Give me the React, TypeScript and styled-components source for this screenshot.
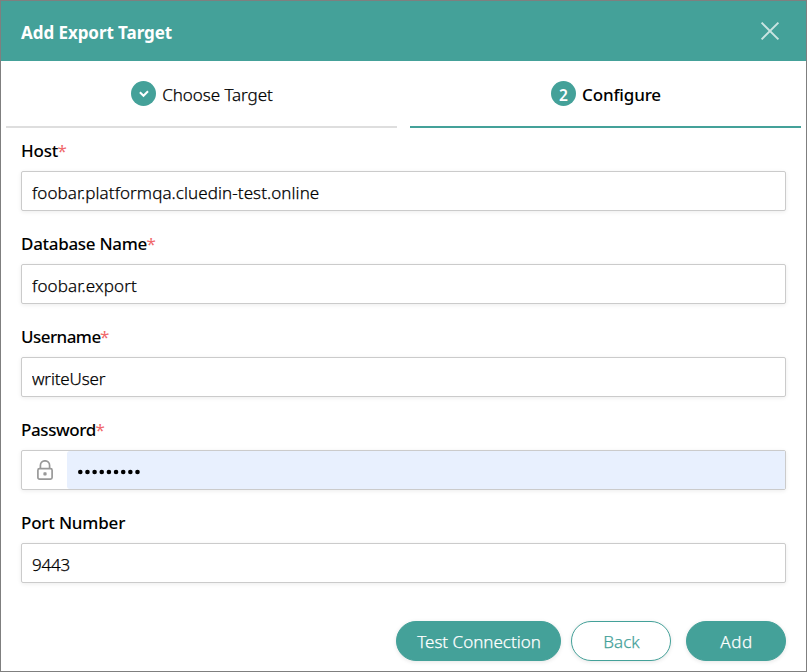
import React from 'react';
import styled, { createGlobalStyle } from 'styled-components';

const TEAL = '#44a199';

const GlobalStyle = createGlobalStyle`
  *, *::before, *::after { box-sizing: border-box; }
  body { margin: 0; background: #fff; }
  button, input { font: inherit; }
`;

const Dialog = styled.main`
  width: 807px;
  height: 672px;
  display: flex;
  flex-direction: column;
  border: 1px solid #7f7f7f;
  background: #fff;
  color: #000;
  font: 400 17px/24px "Noto Sans", "Open Sans", sans-serif;
`;

const Header = styled.header`
  flex: none;
  height: 60px;
  padding: 0 26px 0 20px;
  display: flex;
  align-items: center;
  justify-content: space-between;
  background: ${TEAL};
  color: #fff;
`;

const Title = styled.h1`
  margin: 3px 0 0;
  font-size: 17px;
  font-weight: 700;
  line-height: 24px;
  letter-spacing: -0.06px;
`;

const CloseButton = styled.button`
  display: flex;
  padding: 0;
  border: 0;
  background: none;
  color: #c9e4e1;
`;

const Steps = styled.nav`
  flex: none;
  display: grid;
  grid-template-columns: 391px 391px;
  column-gap: 13px;
  padding-left: 5px;
`;

const Step = styled.div<{ $active?: boolean }>`
  height: 67px;
  padding: 20px 0 0 1px;
  display: flex;
  justify-content: center;
  align-items: flex-start;
  gap: 6px;
  border-bottom: 2px solid ${p => (p.$active ? TEAL : '#dedede')};
`;

const StepBadge = styled.span`
  width: 25px;
  height: 25px;
  display: flex;
  align-items: center;
  justify-content: center;
  border-radius: 50%;
  background: ${TEAL};
  color: #fff;
  font-size: 15.5px;
  font-weight: 600;
  line-height: 25px;
  padding-top: 3px;
`;

const StepLabel = styled.span<{ $active?: boolean }>`
  margin-top: 2px;
  font-weight: ${p => (p.$active ? 500 : 300)};
  letter-spacing: ${p => (p.$active ? '-0.15px' : '-0.05px')};
  -webkit-text-stroke: ${p => (p.$active ? '0' : '0.25px')} #000;
`;

const Form = styled.form`
  flex: 1;
  display: flex;
  flex-direction: column;
  padding: 11px 20px 10px;
`;

const Field = styled.label`
  display: flex;
  flex-direction: column;
  gap: 8px;
  height: 93px;
`;

const Caption = styled.span<{ $tracking: number }>`
  height: 24px;
  font-weight: 500;
  letter-spacing: ${p => p.$tracking}px;
`;

const Required = styled.span`
  margin-left: -0.5px;
  color: #f0696b;
  font-weight: 400;
  letter-spacing: 0;
`;

const InputFrame = styled.span`
  height: 40px;
  display: flex;
  border: 1px solid #cbcbcb;
  border-radius: 2px;
  background: #fff;
  box-shadow: 0 1px 4px rgba(0, 0, 0, 0.08);
`;

const LockCell = styled.span`
  width: 45px;
  padding-left: 1px;
  display: flex;
  align-items: center;
  justify-content: center;
  color: #999;
`;

const Input = styled.input<{ $tracking: number }>`
  flex: 1;
  min-width: 0;
  padding: 4px 10px 0;
  border: 0;
  border-radius: 2px;
  outline: 0;
  background: transparent;
  color: #000;
  font-weight: 300;
  letter-spacing: ${p => p.$tracking}px;
  -webkit-text-stroke: 0.25px #000;
`;

const SecretValue = styled.span`
  flex: 1;
  display: flex;
  align-items: center;
  padding: 3px 0 0 11px;
  border-radius: 3px 1px 1px 3px;
  background: #e8f0fe;
`;

const Actions = styled.footer`
  margin-top: auto;
  display: flex;
  justify-content: flex-end;
`;

const Button = styled.button<{ $width: number; $gap?: number; $outline?: boolean; $tracking?: number }>`
  width: ${p => p.$width}px;
  height: 40px;
  margin-left: ${p => p.$gap ?? 0}px;
  padding: 2px 0 0 1px;
  border: 1px solid ${TEAL};
  border-radius: 20px;
  background: ${p => (p.$outline ? '#fff' : TEAL)};
  color: ${p => (p.$outline ? TEAL : '#fff')};
  font-weight: 300;
  letter-spacing: ${p => p.$tracking ?? 0}px;
  -webkit-text-stroke: 0.25px currentColor;
  box-shadow: 0 1px 4px rgba(0, 0, 0, 0.1);
`;

const CloseIcon = () => (
  <svg width="20" height="20" viewBox="0 0 20 20" fill="none" stroke="currentColor" strokeWidth="2">
    <path d="M1.6 1.6 18.4 18.4M18.4 1.6 1.6 18.4" />
  </svg>
);

const CheckIcon = () => (
  <svg width="11" height="11" viewBox="0 0 11 11" fill="none" stroke="currentColor" strokeWidth="2">
    <path d="M1.9 2.2 5.5 5.8 10 1.3" />
  </svg>
);

const LockIcon = () => (
  <svg width="16" height="20" viewBox="0 0 16 20" fill="none" stroke="currentColor" strokeWidth="1.7">
    <rect x="0.9" y="8.6" width="14.2" height="10.5" rx="1.6" />
    <path d="M3.4 8.6V5.4a4.6 4.6 0 0 1 9.2 0V8.6" />
    <rect x="6.4" y="12.3" width="3.2" height="3.2" rx="0.8" fill="currentColor" stroke="none" />
  </svg>
);

const PasswordDots = () => (
  <svg width="64" height="6" viewBox="0 0 64 6" fill="#000" aria-label="Password entered">
    {Array.from({ length: 9 }, (_, i) => (
      <circle key={i} cx={2.3 + i * 7.15} cy="3" r="2.3" />
    ))}
  </svg>
);

interface FieldData {
  label: string;
  value?: string;
  required?: boolean;
  secret?: boolean;
  labelTracking: number;
  valueTracking?: number;
}

const fields: FieldData[] = [
  { label: 'Host', value: 'foobar.platformqa.cluedin-test.online', required: true, labelTracking: -0.2, valueTracking: 0.08 },
  { label: 'Database Name', value: 'foobar.export', required: true, labelTracking: -0.3, valueTracking: 0.15 },
  { label: 'Username', value: 'writeUser', required: true, labelTracking: -0.55, valueTracking: -0.15 },
  { label: 'Password', required: true, secret: true, labelTracking: -0.4 },
  { label: 'Port Number', value: '9443', labelTracking: -0.2, valueTracking: -0.2 },
];

export default function App() {
  return (
    <>
      <GlobalStyle />
      <Dialog>
        <Header>
          <Title>Add Export Target</Title>
          <CloseButton aria-label="Close"><CloseIcon /></CloseButton>
        </Header>
        <Steps>
          <Step>
            <StepBadge><CheckIcon /></StepBadge>
            <StepLabel>Choose Target</StepLabel>
          </Step>
          <Step $active>
            <StepBadge>2</StepBadge>
            <StepLabel $active>Configure</StepLabel>
          </Step>
        </Steps>
        <Form onSubmit={e => e.preventDefault()}>
          {fields.map(f => (
            <Field key={f.label}>
              <Caption $tracking={f.labelTracking}>
                {f.label}
                {f.required && <Required>*</Required>}
              </Caption>
              <InputFrame>
                {f.secret ? (
                  <>
                    <LockCell><LockIcon /></LockCell>
                    <SecretValue><PasswordDots /></SecretValue>
                  </>
                ) : (
                  <Input $tracking={f.valueTracking ?? 0} defaultValue={f.value} spellCheck={false} />
                )}
              </InputFrame>
            </Field>
          ))}
          <Actions>
            <Button type="button" $width={165}>Test Connection</Button>
            <Button type="button" $width={100} $gap={10} $outline $tracking={0.1}>Back</Button>
            <Button type="submit" $width={100} $gap={15} $tracking={0.6}>Add</Button>
          </Actions>
        </Form>
      </Dialog>
    </>
  );
}
